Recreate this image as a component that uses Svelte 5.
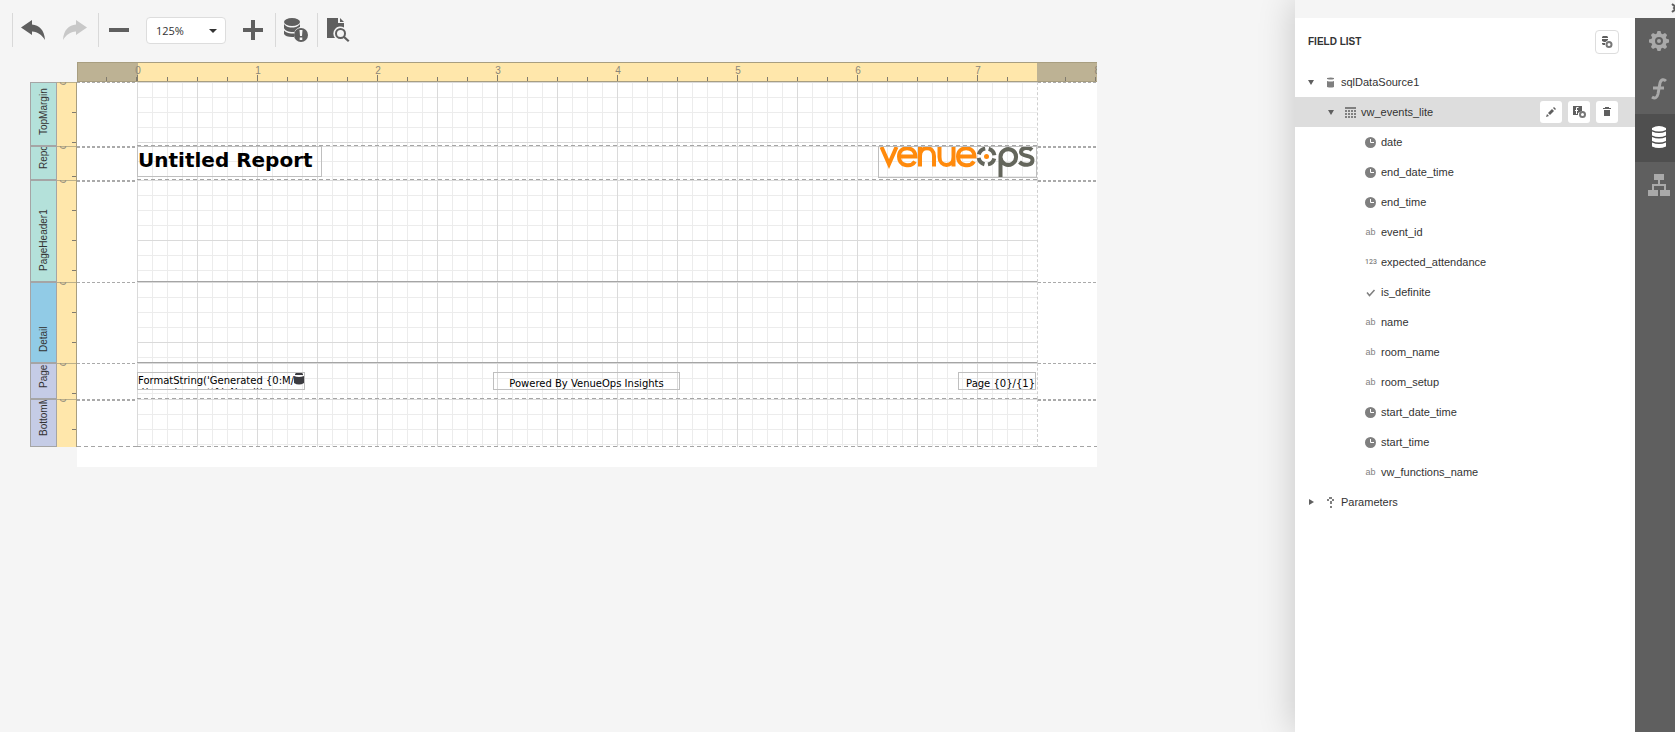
<script>
    let zoom = "125%";
    let selected = "vw_events_lite";
    let activeTab = "Fields";

    const marks = [0, 1, 2, 3, 4, 5, 6, 7];

    let bands = [
        { name: "TopMargin", kind: "margin", height: 64 },
        { name: "ReportHeader1", short: "Repo", kind: "margin", height: 34 },
        { name: "PageHeader1", kind: "margin", height: 102, line: "solid" },
        { name: "Detail", kind: "detail", height: 81, line: "solid" },
        { name: "PageFooter1", short: "Page", kind: "footer", height: 36 },
        { name: "BottomMargin", short: "BottomM", kind: "footer", height: 48 }
    ];

    let fields = [
        { name: "date", type: "date" },
        { name: "end_date_time", type: "date" },
        { name: "end_time", type: "date" },
        { name: "event_id", type: "text" },
        { name: "expected_attendance", type: "number" },
        { name: "is_definite", type: "bool" },
        { name: "name", type: "text" },
        { name: "room_name", type: "text" },
        { name: "room_setup", type: "text" },
        { name: "start_date_time", type: "date" },
        { name: "start_time", type: "date" },
        { name: "vw_functions_name", type: "text" }
    ];

    let tabs = ["Properties", "Expressions", "Fields", "Explorer"];
</script>

<div class="designer">
    <main class="workspace">
        <div class="toolbar">
            <div class="group">
                <button aria-label="Undo">
                    <svg width="24" height="20" viewBox="0 0 24 20"><path d="M0 7.500 11 0v4.500C18 5 23.500 10 24 20 20.500 14.500 17 12 11 11.500V15z" /></svg>
                </button>
                <button aria-label="Redo" disabled>
                    <svg width="24" height="20" viewBox="0 0 24 20"><path d="M24 7.500 13 0v4.500C6 5 .5 10 0 20 3.500 14.500 7 12 13 11.500V15z" /></svg>
                </button>
            </div>
            <div class="group zoom">
                <button aria-label="Zoom out"><svg width="20" height="20"><path d="M0 8h20v4H0z" /></svg></button>
                <div class="select">
                    <select aria-label="Zoom" bind:value={zoom}>
                        <option>100%</option>
                        <option>125%</option>
                        <option>150%</option>
                    </select>
                    <svg width="8" height="4"><path d="M0 0h8L4 4z" /></svg>
                </div>
                <button aria-label="Zoom in"><svg width="20" height="20"><path d="M8 0h4v8h8v4h-8v8H8v-8H0V8h8z" /></svg></button>
            </div>
            <div class="group">
                <button aria-label="Validate bindings">
                    <svg width="24" height="24" viewBox="0 0 24 24">
                        <ellipse cx="8" cy="4" rx="8" ry="4" />
                        <path d="M0 6c2 3 6 3.500 8 3.500S14 9 16 6v3c-3 1-5 3-5.500 5C6 14.500 1 13 0 10zM0 12.500c2 2.500 6 3 10 3v3.500C5 19.500 1 18 0 16z" />
                        <circle cx="17" cy="17" r="7" />
                        <path class="light" d="M15.500 12h3l-.5 6h-2zM15.700 19.500h2.600V22h-2.600z" />
                    </svg>
                </button>
            </div>
            <div class="group">
                <button aria-label="Preview">
                    <svg width="24" height="24" viewBox="0 0 24 24">
                        <path d="M1 0h11v5h6v4.500A7 7 0 0 0 9 20H1zM14 0l4 4h-4z" />
                        <circle class="ring" cx="14.500" cy="15.500" r="4.500" />
                        <path d="m17 19.500 1.500-1.500 5 4.500-1.500 1.500z" />
                    </svg>
                </button>
            </div>
        </div>

        <div class="surface">
            <div class="top-ruler">
                <div class="outside"></div>
                <div class="inches">
                    {#each marks as mark}
                        <div class="inch"><span>{mark}</span></div>
                    {/each}
                </div>
                <div class="outside last"><span>8</span></div>
            </div>

            {#each bands as band, i}
                <div class="band" style:height="{band.height}px">
                    <div class="band-name {band.kind}"><span>{band.short ?? band.name}</span></div>
                    <div class="side-ruler"><span>0</span></div>
                    <div class="gutter" class:thick={i === 1 || i === 2 || i === 5}></div>
                    <div class="content {band.line}">
                        {#if band.name === "ReportHeader1"}
                            <div class="control title">Untitled Report</div>
                            <div class="control logo">
                                <svg width="157" height="31" viewBox="0 0 157 31" role="img" aria-label="venueops">
                                    <g class="orange">
                                        <path d="M2.500 0 10 17 17.500 0" />
                                        <path d="M20.500 9.500h16C36-1.500 20-1.500 20 9.500c0 10 12 11 16 5" />
                                        <path d="M41 19.500V9c0-10.500 14-10.500 14 0v10.500M41 10V0" />
                                        <path d="M60.500 0v10c0 10.500 14 10.500 14 0V0M74.500 9v10.500" />
                                        <path d="M79.500 9.500h16C95-1.500 79-1.500 79 9.500c0 10 12 11 16 5" />
                                    </g>
                                    <circle class="target" cx="107.500" cy="9.500" r="8" />
                                    <circle class="dot" cx="107.500" cy="9.500" r="2.500" />
                                    <g class="grey">
                                        <path d="M121.500 31V9.500a7.800 7.800 0 1 1 0 1" />
                                        <path d="M153 3c-3-3-11-3-11 2 0 5.500 11.500 2 11.500 8 0 6-9 6-13 2" />
                                    </g>
                                </svg>
                            </div>
                        {:else if band.name === "PageFooter1"}
                            <div class="control generated">
                                FormatString('Generated {"{0:M/"} d/yyyy h:mm tt{"}"}', Now())
                                <svg width="10" height="12" viewBox="0 0 10 12"><path d="M2 0h6l1 1v1H1V1zM0 3q5 2 10 0v7q-5 3-10 0z" /></svg>
                            </div>
                            <div class="control powered">Powered By VenueOps Insights</div>
                            <div class="control page-no">Page {"{0}/{1}"}</div>
                        {/if}
                    </div>
                    <div class="gutter right" class:thick={i === 1 || i === 2 || i === 5}></div>
                </div>
            {/each}
            <div class="page-end"></div>
        </div>
    </main>

    <aside class="panel">
        <div class="panel-top">
            <button aria-label="Collapse"><svg width="8" height="10" viewBox="0 0 8 10"><path d="M1 1l5 4-5 4M7 1 3 5l4 4" /></svg></button>
        </div>
        <div class="panel-body">
            <section class="fields">
                <header>
                    <h2>FIELD LIST</h2>
                    <button class="add" aria-label="Add data source">
                        <svg width="12" height="12" viewBox="0 0 12 12"><path d="M2 0h4l1 1v1H1V1zM1 3h6v1L4.500 6H3L1 5zM1 7h3v2H2L1 8z" /><circle class="badge" cx="8" cy="8.500" r="2.500" /></svg>
                    </button>
                </header>
                <div class="row">
                    <svg class="arrow" width="6" height="5"><path d="M0 0h6L3 5z" /></svg>
                    <svg class="icon" width="11" height="11"><path d="M2 1q4-1 7 0v1q-3 1-7 0zM2 4q4 1 7 0v6q-3 1-7 0z" /></svg>
                    <span>sqlDataSource1</span>
                </div>
                <div class="row level-1" class:selected={selected === "vw_events_lite"}>
                    <svg class="arrow" width="6" height="5"><path d="M0 0h6L3 5z" /></svg>
                    <svg class="icon" width="11" height="11" viewBox="0 0 11 11"><path d="M0 0h11v2H0z" /><path class="cells" d="M0 4h11M0 7h11M0 10h11" /></svg>
                    <span>vw_events_lite</span>
                    <div class="actions">
                        <button aria-label="Edit"><svg width="10" height="10" viewBox="0 0 10 10"><path d="m0 10 1-3 2 2zM2 6l4-4 2 2-4 4zM7 1l1-1 2 2-1 1z" /></svg></button>
                        <button aria-label="Add calculated field">
                            <svg width="13" height="12" viewBox="0 0 13 12"><path d="M0 0h9v5L5 7v2H0z" /><path class="fx" d="M5.500 1.500h-2V8M2 4.500h3" /><circle class="badge" cx="9.500" cy="8.500" r="2.500" /></svg>
                        </button>
                        <button aria-label="Delete"><svg width="8" height="10" viewBox="0 0 8 10"><path d="M2 0h4v1h2v1H0V1h2zM1 3h6v6H1z" /></svg></button>
                    </div>
                </div>
                {#each fields as field}
                    <div class="row level-2">
                        {#if field.type === "date"}
                            <svg class="icon" width="11" height="11" viewBox="0 0 11 11"><circle cx="5.500" cy="5.500" r="5.500" /><path class="hands" d="M5.500 2v3.500H9" /></svg>
                        {:else if field.type === "bool"}
                            <svg class="icon" width="11" height="11" viewBox="0 0 11 11"><path class="check" d="m2 5.500 2.500 3L9.500 3" /></svg>
                        {:else}
                            <span class="glyph" class:digits={field.type === "number"}>{field.type === "number" ? "123" : "ab"}</span>
                        {/if}
                        <span>{field.name}</span>
                    </div>
                {/each}
                <div class="row">
                    <svg class="arrow" width="6" height="6"><path d="M1 0l5 3-5 3z" /></svg>
                    <svg class="icon" width="11" height="11" viewBox="0 0 11 11"><path d="M4 0h3v2H4zM2 2h2v2H2zM7 2h2v2H7zM5 4h2v3H5zM5 9h2v2H5z" /></svg>
                    <span>Parameters</span>
                </div>
            </section>
            <nav class="tabs">
                {#each tabs as tab}
                    <button aria-label={tab} class:active={activeTab === tab} onclick={() => activeTab = tab}>
                        {#if tab === "Properties"}
                            <svg width="20" height="20" viewBox="0 0 20 20"><path fill-rule="evenodd" d="M8.500 0h3l.7 2.600 1.400.6L16 1.900 18.100 4l-1.300 2.400.6 1.400L20 8.500v3l-2.600.7-.6 1.400L18.100 16 16 18.100l-2.400-1.300-1.400.6-.7 2.600h-3l-.7-2.600-1.400-.6L4 18.100 1.900 16l1.300-2.400-.6-1.400L0 11.500v-3l2.600-.7.6-1.400L1.900 4 4 1.900l2.400 1.300 1.400-.6zM10 6a4 4 0 1 0 0 8 4 4 0 0 0 0-8z" /><circle cx="10" cy="10" r="2" /></svg>
                        {:else if tab === "Expressions"}
                            <svg width="16" height="22" viewBox="0 0 16 22"><path class="curve" d="M15 3c-2-2-5-2-6 2L7 16c-1 4-3 5-6 3M2 10h11" /></svg>
                        {:else if tab === "Fields"}
                            <svg width="14" height="22" viewBox="0 0 14 22"><path d="M0 2q7-4 14 0v2q-7 3-14 0zM0 5.500q7 3 14 0v4q-7 3-14 0zM0 11q7 3 14 0v4q-7 3-14 0zM0 16.500q7 3 14 0v4q-7 3-14 0z" /></svg>
                        {:else}
                            <svg width="22" height="22" viewBox="0 0 22 22"><path d="M6 0h10v6H6zM0 16h10v6H0zM12 16h10v6H12zM10 6h2v4h6v6h-2v-4H6v4H4v-6h6z" /></svg>
                        {/if}
                    </button>
                {/each}
            </nav>
        </div>
    </aside>
</div>

<style>
    :global(body) {
        background: #f5f5f5;
    }

    .designer {
        display: flex;
        min-height: 100vh;
        overflow: hidden;
        background: #f5f5f5;
        color: #333;
        font-family: "Liberation Sans", Arial, sans-serif;
        font-size: 11px;
    }

    button {
        display: flex;
        align-items: center;
        justify-content: center;
        padding: 0;
        border: 0;
        background: none;
        cursor: pointer;
    }

    svg {
        display: block;
        flex: none;
        fill: #5f5f5f;
    }

    .workspace {
        flex: 1;
        min-width: 0;
    }

    .toolbar {
        display: flex;
        padding: 13px 12px 15px;
    }

    .group {
        display: flex;
        align-items: center;
        gap: 18px;
        height: 34px;
        padding: 0 9px 0 8px;
        border-left: 1px solid #d9d9d9;
    }

    .group:first-child {
        padding-right: 11px;
    }

    .group.zoom {
        gap: 17px;
        padding: 0 12px 0 10px;
    }

    .group button:disabled svg {
        fill: #c8c8c8;
    }

    .light {
        fill: #f5f5f5;
    }

    .ring {
        fill: none;
        stroke: #5f5f5f;
        stroke-width: 2;
    }

    .select {
        position: relative;
    }

    .select select {
        appearance: none;
        display: block;
        width: 80px;
        height: 27px;
        padding: 0 9px;
        border: 1px solid #ddd;
        border-radius: 4px;
        background: #fff;
        color: #333;
        font-family: "Open Sans", sans-serif;
        font-size: 11px;
    }

    .select svg {
        position: absolute;
        top: 12px;
        right: 9px;
        fill: #333;
        pointer-events: none;
    }

    .surface {
        width: 1067px;
        padding-left: 30px;
    }

    .top-ruler {
        display: flex;
        box-sizing: border-box;
        height: 20px;
        margin-left: 47px;
        border: 1px solid #a89e80;
        border-width: 1px 0 1px 1px;
        background: #ffe7ab;
        color: #8b8678;
        font-size: 10px;
        overflow: hidden;
    }

    .outside {
        position: relative;
        box-sizing: border-box;
        width: 60px;
        background: repeating-linear-gradient(to right, transparent 0 28px, #807b6f 28px 29px, transparent 29px 30px) 0 100% / 100% 4px no-repeat #bdb294;
    }

    .inches {
        position: relative;
        display: flex;
        flex: 1;
        margin-left: -1px;
        background: repeating-linear-gradient(to right, #807b6f 0 1px, transparent 1px 30px) 0 100% / 100% 4px no-repeat;
    }

    .inch {
        width: 120px;
        flex: none;
        background: linear-gradient(#807b6f, #807b6f) 0 100% / 1px 6px no-repeat;
    }

    .inch:last-child {
        width: 60px;
    }

    .inch span {
        display: block;
        width: 10px;
        margin-left: -4px;
        line-height: 16px;
        text-align: center;
    }

    .last span {
        position: absolute;
        right: -3px;
        line-height: 16px;
    }

    .band {
        display: flex;
    }

    /* rotated half a turn, so the text starts at the bottom edge */
    .band-name {
        display: flex;
        align-items: center;
        justify-content: flex-start;
        box-sizing: border-box;
        width: 27px;
        padding: 10px 0 0;
        border: 1px solid #a5a5a5;
        overflow: hidden;
        writing-mode: vertical-rl;
        transform: rotate(180deg);
        font-size: 10px;
        white-space: nowrap;
    }

    .band-name.margin {
        background: #b4e1da;
    }

    .band-name.detail {
        background: #91cbe6;
    }

    .band-name.footer {
        background: #c5cce6;
    }

    .side-ruler {
        box-sizing: border-box;
        width: 20px;
        border-right: 1px solid #a89e80;
        background: repeating-linear-gradient(to bottom, #807b6f 0 1px, transparent 1px 30px) 100% 0 / 4px 100% no-repeat #ffe7ab;
        box-shadow: inset 0 1px #bcb08a;
        overflow: hidden;
    }

    .side-ruler span {
        display: block;
        width: 12px;
        height: 6px;
        margin-top: -2px;
        color: #8b8678;
        font-size: 9px;
        line-height: 12px;
        writing-mode: vertical-rl;
    }

    .gutter {
        box-sizing: border-box;
        width: 60px;
        background: repeating-linear-gradient(to right, #aaa 0 3px, transparent 3px 5px) 0 0 / 100% 1px no-repeat #fff;
    }

    .thick {
        background-size: 100% 2px;
    }

    .gutter.right {
        border-left: 1px dashed #d0d0d0;
    }

    .content {
        position: relative;
        flex: 1;
        background:
            repeating-linear-gradient(to right, #dadada 0 1px, transparent 1px 60px),
            repeating-linear-gradient(to bottom, #dadada 0 1px, transparent 1px 60px),
            repeating-linear-gradient(to right, #ececec 0 1px, transparent 1px 15px),
            repeating-linear-gradient(to bottom, #ececec 0 1px, transparent 1px 15px),
            #fff;
    }

    .content::after {
        content: "";
        position: absolute;
        right: 0;
        bottom: 0;
        left: 0;
        height: 1px;
        background: repeating-linear-gradient(to right, #a5a5a5 0 4px, transparent 4px 7px);
    }

    .content.solid::after {
        background: #a5a5a5;
    }

    .control {
        position: absolute;
        box-sizing: border-box;
        border: 1px solid #bfbfbf;
        overflow: hidden;
        color: #000;
        font-family: Verdana, "DejaVu Sans", sans-serif;
        font-size: 10px;
        line-height: 12px;
    }

    .title {
        top: 0;
        left: 0;
        width: 185px;
        height: 31px;
        font-size: 20px;
        font-weight: bold;
        line-height: 26px;
        white-space: nowrap;
    }

    .logo {
        top: 0;
        right: 0;
        width: 159px;
        height: 32px;
    }

    .logo g,
    .target {
        fill: none;
        stroke-width: 4;
    }

    .orange {
        stroke: #ff8a0c;
    }

    .grey,
    .target {
        stroke: #64665c;
    }

    .target {
        stroke-dasharray: 9 3.566;
        stroke-dashoffset: -2;
    }

    .dot {
        fill: #ff8a0c;
    }

    .generated {
        top: 9px;
        left: 0;
        width: 168px;
        height: 18px;
        padding-top: 2px;
    }

    .generated svg {
        position: absolute;
        top: 0;
        right: 0;
        fill: #3c3c41;
    }

    .powered {
        top: 9px;
        left: 356px;
        width: 187px;
        height: 18px;
        padding-top: 5px;
        text-align: center;
    }

    .page-no {
        top: 9px;
        right: 1px;
        width: 78px;
        height: 18px;
        padding-top: 5px;
        text-align: right;
        white-space: nowrap;
    }

    .page-end {
        height: 20px;
        margin-left: 47px;
        background: #fff;
    }

    .band:nth-last-child(2) .gutter {
        background: repeating-linear-gradient(to right, #a5a5a5 0 4px, transparent 4px 7px) 0 100% / 100% 1px no-repeat, repeating-linear-gradient(to right, #aaa 0 3px, transparent 3px 5px) 0 0 / 100% 2px no-repeat #fff;
    }

    .panel {
        display: flex;
        flex-direction: column;
        box-sizing: border-box;
        width: 380px;
        flex: none;
        box-shadow: 0 0 35px rgba(0, 0, 0, 0.2);
    }

    .panel-top {
        display: flex;
        justify-content: flex-end;
        height: 18px;
        background: #f5f5f5;
        overflow: hidden;
    }

    .panel-top button {
        height: 15px;
        margin-right: -4px;
    }

    .panel-top path {
        fill: none;
        stroke: #5f5f5f;
        stroke-width: 2;
    }

    .panel-body {
        display: flex;
        flex: 1;
    }

    .fields {
        flex: 1;
        min-width: 0;
        background: #fff;
    }

    .fields header {
        display: flex;
        align-items: center;
        justify-content: space-between;
        height: 47px;
        padding: 0 16px 2px 13px;
    }

    .fields h2 {
        margin: 0;
        font-size: 10px;
        line-height: 12px;
    }

    .add {
        width: 24px;
        height: 24px;
        border: 1px solid #ddd;
        border-radius: 4px;
    }

    .badge {
        fill: #fff;
        stroke: #777;
        stroke-width: 2;
    }

    .row {
        display: flex;
        align-items: center;
        height: 30px;
        padding: 0 17px 0 13px;
    }

    .level-1 {
        padding-left: 33px;
    }

    .level-2 {
        padding-left: 70px;
    }

    .selected {
        background: #ddd;
    }

    .arrow {
        margin-right: 11px;
    }

    .icon {
        margin-right: 5px;
        fill: #7f7f7f;
    }

    .glyph {
        width: 11px;
        margin-right: 5px;
        color: #7f7f7f;
        font-size: 9px;
        text-align: center;
    }

    .digits {
        font-family: Roboto, sans-serif;
        font-size: 7px;
        font-weight: 500;
    }

    .cells {
        stroke: #7f7f7f;
        stroke-width: 2;
        stroke-dasharray: 2 1;
    }

    .hands {
        fill: none;
        stroke: #fff;
    }

    .check {
        fill: none;
        stroke: #7f7f7f;
        stroke-width: 1.5;
    }

    .fx {
        fill: none;
        stroke: #fff;
    }

    .actions {
        display: flex;
        gap: 6px;
        margin-left: auto;
    }

    .actions button {
        width: 22px;
        height: 22px;
        border-radius: 3px;
        background: #fff;
    }

    .tabs {
        width: 40px;
        background: #5f5f5f;
        overflow: hidden;
    }

    .tabs button {
        width: 48px;
        height: 48px;
        padding-bottom: 2px;
    }

    .tabs svg {
        fill: #a9a9a9;
    }

    .tabs .active {
        background: #4f4f4f;
    }

    .tabs .active svg {
        fill: #fff;
    }

    .tabs .curve {
        fill: none;
        stroke: #a9a9a9;
        stroke-width: 3;
    }
</style>
